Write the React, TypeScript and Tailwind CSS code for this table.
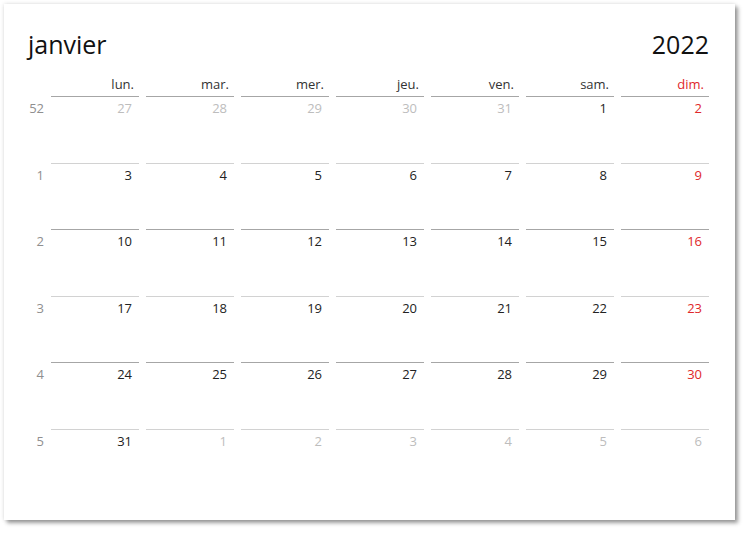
const days = ['lun.', 'mar.', 'mer.', 'jeu.', 'ven.', 'sam.', 'dim.'];

type Cell = { n: number; out?: boolean };

const weeks: { wk: number; cells: Cell[] }[] = [
  { wk: 52, cells: [{ n: 27, out: true }, { n: 28, out: true }, { n: 29, out: true }, { n: 30, out: true }, { n: 31, out: true }, { n: 1 }, { n: 2 }] },
  { wk: 1, cells: [3, 4, 5, 6, 7, 8, 9].map((n) => ({ n })) },
  { wk: 2, cells: [10, 11, 12, 13, 14, 15, 16].map((n) => ({ n })) },
  { wk: 3, cells: [17, 18, 19, 20, 21, 22, 23].map((n) => ({ n })) },
  { wk: 4, cells: [24, 25, 26, 27, 28, 29, 30].map((n) => ({ n })) },
  { wk: 5, cells: [{ n: 31 }, { n: 1, out: true }, { n: 2, out: true }, { n: 3, out: true }, { n: 4, out: true }, { n: 5, out: true }, { n: 6, out: true }] },
];

// rows sit on half pixels in the original, so every other rule looks lighter
const ruleColors = ['border-[#a6a6a6]', 'border-[#d2d2d2]'];

function dayColor(cell: Cell, col: number) {
  if (cell.out) return 'text-[#bdbdbd]';
  if (col === 6) return 'text-[#e0282b]';
  return 'text-[#222]';
}

export default function App() {
  return (
    <div className="min-h-[540px] bg-white pt-[4px] pl-[4px] font-['Open_Sans',sans-serif]">
      <div className="w-[731px] h-[516px] bg-white pt-[24px] pl-[23px] pr-[26px] shadow-[3px_3px_4px_rgba(0,0,0,0.38),0_0_4px_rgba(0,0,0,0.14)]">
        <div className="flex justify-between items-start text-[25px] leading-[32px] text-[#111]">
          <span className="pl-[1px]">janvier</span>
          <span>2022</span>
        </div>

        <div className="mt-[15px] grid grid-cols-[17px_repeat(7,88px)] gap-x-[7px]">
          <div />
          {days.map((d, i) => (
            <div
              key={d}
              className={`text-right text-[13px] leading-[18px] pr-[5px] pb-[3px] ${i === 6 ? 'text-[#e0282b]' : 'text-[#333]'}`}
            >
              {d}
            </div>
          ))}
        </div>

        {weeks.map((w, r) => (
          <div key={w.wk} className="grid grid-cols-[17px_repeat(7,88px)] gap-x-[7px] h-[66.5px]">
            <div className="pt-[3px] text-right text-[13px] leading-[18px] text-[#8f8f8f]">{w.wk}</div>
            {w.cells.map((c, i) => (
              <div
                key={i}
                className={`border-t pt-[2px] pr-[7px] text-right text-[13px] leading-[18px] ${ruleColors[r % 2]} ${dayColor(c, i)}`}
              >
                {c.n}
              </div>
            ))}
          </div>
        ))}
      </div>
    </div>
  );
}
